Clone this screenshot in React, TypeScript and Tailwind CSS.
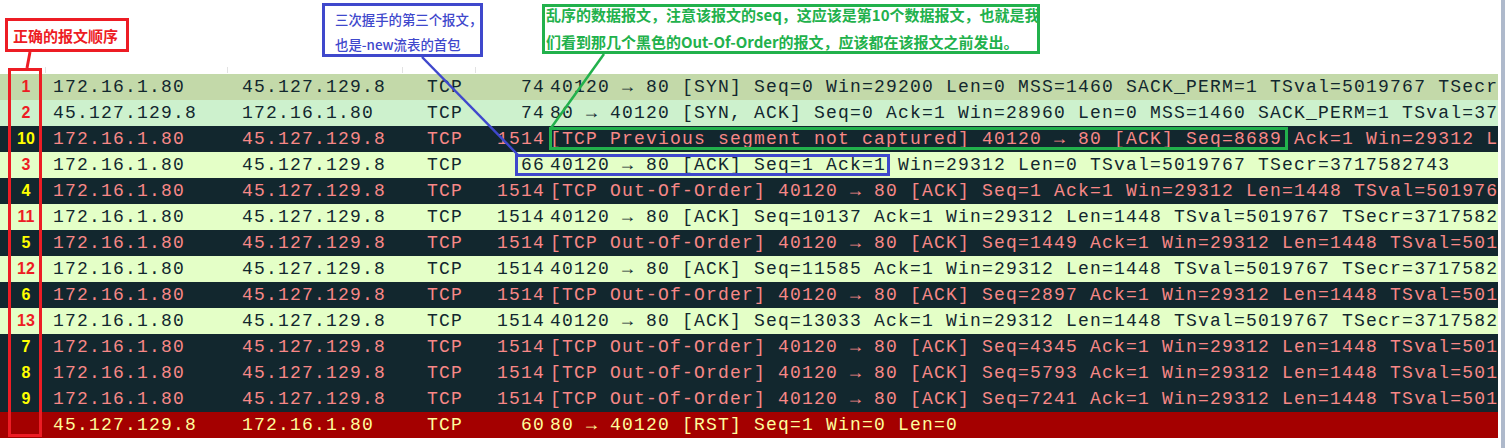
import React from "react";

type Row = {
  num: string;
  numColor: string;
  bg: string;
  fg: string;
  src: string;
  dst: string;
  len: string;
  info: string;
};

const LIGHT = "bg-[#e4ffc7]";
const DARK = "bg-[#12272e]";
const FG_L = "text-[#12272e]";
const FG_D = "text-[#f78787]";
const RED = "text-[#ed1c24]";
const YEL = "text-[#ffff00]";

const A = "172.16.1.80";
const B = "45.127.129.8";

const rows: Row[] = [
  { num: "1", numColor: RED, bg: "bg-[#c3d9a9]", fg: FG_L, src: A, dst: B, len: "74", info: "40120 → 80 [SYN] Seq=0 Win=29200 Len=0 MSS=1460 SACK_PERM=1 TSval=5019767 TSecr" },
  { num: "2", numColor: RED, bg: "bg-[#cdf1cd]", fg: FG_L, src: B, dst: A, len: "74", info: "80 → 40120 [SYN, ACK] Seq=0 Ack=1 Win=28960 Len=0 MSS=1460 SACK_PERM=1 TSval=37" },
  { num: "10", numColor: YEL, bg: DARK, fg: FG_D, src: A, dst: B, len: "1514", info: "[TCP Previous segment not captured] 40120 → 80 [ACK] Seq=8689 Ack=1 Win=29312 L" },
  { num: "3", numColor: RED, bg: LIGHT, fg: FG_L, src: A, dst: B, len: "66", info: "40120 → 80 [ACK] Seq=1 Ack=1 Win=29312 Len=0 TSval=5019767 TSecr=3717582743" },
  { num: "4", numColor: YEL, bg: DARK, fg: FG_D, src: A, dst: B, len: "1514", info: "[TCP Out-Of-Order] 40120 → 80 [ACK] Seq=1 Ack=1 Win=29312 Len=1448 TSval=501976" },
  { num: "11", numColor: RED, bg: LIGHT, fg: FG_L, src: A, dst: B, len: "1514", info: "40120 → 80 [ACK] Seq=10137 Ack=1 Win=29312 Len=1448 TSval=5019767 TSecr=3717582" },
  { num: "5", numColor: YEL, bg: DARK, fg: FG_D, src: A, dst: B, len: "1514", info: "[TCP Out-Of-Order] 40120 → 80 [ACK] Seq=1449 Ack=1 Win=29312 Len=1448 TSval=501" },
  { num: "12", numColor: RED, bg: LIGHT, fg: FG_L, src: A, dst: B, len: "1514", info: "40120 → 80 [ACK] Seq=11585 Ack=1 Win=29312 Len=1448 TSval=5019767 TSecr=3717582" },
  { num: "6", numColor: YEL, bg: DARK, fg: FG_D, src: A, dst: B, len: "1514", info: "[TCP Out-Of-Order] 40120 → 80 [ACK] Seq=2897 Ack=1 Win=29312 Len=1448 TSval=501" },
  { num: "13", numColor: RED, bg: LIGHT, fg: FG_L, src: A, dst: B, len: "1514", info: "40120 → 80 [ACK] Seq=13033 Ack=1 Win=29312 Len=1448 TSval=5019767 TSecr=3717582" },
  { num: "7", numColor: YEL, bg: DARK, fg: FG_D, src: A, dst: B, len: "1514", info: "[TCP Out-Of-Order] 40120 → 80 [ACK] Seq=4345 Ack=1 Win=29312 Len=1448 TSval=501" },
  { num: "8", numColor: YEL, bg: DARK, fg: FG_D, src: A, dst: B, len: "1514", info: "[TCP Out-Of-Order] 40120 → 80 [ACK] Seq=5793 Ack=1 Win=29312 Len=1448 TSval=501" },
  { num: "9", numColor: YEL, bg: DARK, fg: FG_D, src: A, dst: B, len: "1514", info: "[TCP Out-Of-Order] 40120 → 80 [ACK] Seq=7241 Ack=1 Win=29312 Len=1448 TSval=501" },
  { num: "", numColor: YEL, bg: "bg-[#a40000]", fg: "text-[#fffc9c]", src: B, dst: A, len: "60", info: "80 → 40120 [RST] Seq=1 Win=0 Len=0" },
];

const CJK = "font-['Noto_Sans_CJK_SC','Microsoft_YaHei',sans-serif]";

export default function App() {
  return (
    <div className="relative flex h-[448px] w-[1505px] overflow-hidden bg-white">
      <div className="flex w-[1498px] flex-col">
        {/* annotation header */}
        <div className={`flex h-[74px] items-start font-bold ${CJK}`}>
          <div className="ml-[5px] mt-[18px] flex h-[34px] w-[124px] items-center border-[3px] border-[#ed1c24] pl-[5px] text-[15px] leading-none text-[#ed1c24] whitespace-nowrap">
            正确的报文顺序
          </div>
          <div className="ml-[193px] mt-[3px] h-[54px] w-[161px] border-[3px] border-[#3f48cc] pl-[10px] pt-[1px] text-[13.4px] font-medium leading-[25px] text-[#3f48cc] whitespace-nowrap">
            <div>三次握手的第三个报文，</div>
            <div>也是-new流表的首包</div>
          </div>
          <div className="ml-[59px] mt-[4px] h-[50px] w-[498px] border-[3px] border-[#22b14c] pl-[1px] text-[15px] leading-[27px] text-[#22b14c] whitespace-nowrap">
            <div className="-mt-[6px]">
              <div>乱序的数据报文，注意该报文的seq，这应该是第10个数据报文，也就是我</div>
              <div>们看到那几个黑色的Out-Of-Order的报文，应该都在该报文之前发出。</div>
            </div>
          </div>
        </div>

        {/* packet list */}
        <div className="flex flex-col font-['Liberation_Mono','DejaVu_Sans_Mono',monospace] text-[18px] leading-none tracking-[1.2px]">
          {rows.map((r, i) => (
            <div
              key={i}
              className={`grid h-[26px] grid-cols-[53px_189px_185px_63px_55px_1fr] items-center whitespace-nowrap ${r.bg} ${r.fg}`}
            >
              <div className={`ml-[8px] w-[36px] text-center font-['Liberation_Sans',Arial,sans-serif] text-[16px] font-bold tracking-normal ${r.numColor}`}>
                {r.num}
              </div>
              <div>{r.src}</div>
              <div>{r.dst}</div>
              <div>TCP</div>
              <div className="text-right">{r.len}</div>
              <div className="overflow-hidden pl-[5px]">{r.info}</div>
            </div>
          ))}
        </div>
      </div>
      <div className="w-[3px]" />
      <div className="w-[4px] bg-[#aeb9cb]" />

      {/* overlay boxes drawn on the screenshot */}
      <div className="pointer-events-none absolute left-[8px] top-[68px] h-[369px] w-[34px] border-[3px] border-[#ed1c24]" />
      <div className="pointer-events-none absolute left-[515px] top-[154px] h-[22px] w-[375px] border-[3px] border-[#3f48cc]" />
      <div className="pointer-events-none absolute left-[549px] top-[127px] h-[23px] w-[739px] border-[3px] border-[#22b14c]" />

      <svg className="pointer-events-none absolute left-0 top-0" width="1505" height="448" viewBox="0 0 1505 448">
        <g stroke="#e2e2e2" strokeWidth="1">
          <line x1="45.5" y1="67" x2="45.5" y2="73" />
          <line x1="227.5" y1="67" x2="227.5" y2="73" />
          <line x1="402.5" y1="67" x2="402.5" y2="73" />
          <line x1="475.5" y1="67" x2="475.5" y2="73" />
        </g>
        <line x1="30" y1="52" x2="27" y2="68" stroke="#ed1c24" strokeWidth="3" />
        <line x1="422" y1="57" x2="518" y2="155" stroke="#3f48cc" strokeWidth="2.5" />
        <line x1="604" y1="54" x2="551" y2="128" stroke="#22b14c" strokeWidth="2.5" />
      </svg>
    </div>
  );
}
